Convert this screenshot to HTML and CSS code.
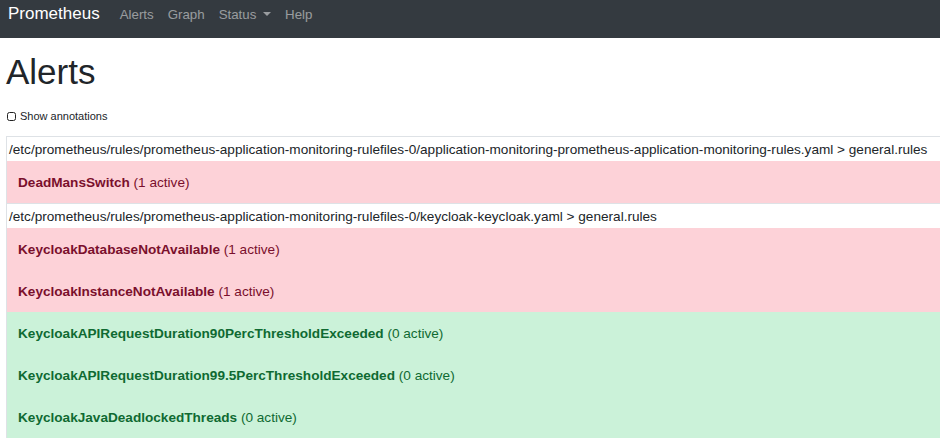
FILE: index.html
```html
<!DOCTYPE html>
<html lang="en">
<head>
<meta charset="utf-8">
<title>Prometheus Time Series Collection and Processing Server</title>
<link rel="stylesheet" href="styles.css">
</head>
<body>
<nav class="navbar">
  <a class="brand" href="#">Prometheus</a>
  <ul class="nav">
    <li><a href="#">Alerts</a></li>
    <li><a href="#">Graph</a></li>
    <li><a href="#">Status <span class="caret"></span></a></li>
    <li><a href="#">Help</a></li>
  </ul>
</nav>
<main class="container">
  <h1 class="title">Alerts</h1>
  <label class="show-ann"><span class="box"></span>Show annotations</label>
  <table class="alerts">
    <tbody>
      <tr class="file"><td>/etc/prometheus/rules/prometheus-application-monitoring-rulefiles-0/application-monitoring-prometheus-application-monitoring-rules.yaml &gt; general.rules</td></tr>
      <tr class="alert firing"><td><b>DeadMansSwitch</b> (1 active)</td></tr>
      <tr class="file"><td>/etc/prometheus/rules/prometheus-application-monitoring-rulefiles-0/keycloak-keycloak.yaml &gt; general.rules</td></tr>
      <tr class="alert firing"><td><b>KeycloakDatabaseNotAvailable</b> (1 active)</td></tr>
      <tr class="alert firing"><td><b>KeycloakInstanceNotAvailable</b> (1 active)</td></tr>
      <tr class="alert ok"><td><b>KeycloakAPIRequestDuration90PercThresholdExceeded</b> (0 active)</td></tr>
      <tr class="alert ok"><td><b>KeycloakAPIRequestDuration99.5PercThresholdExceeded</b> (0 active)</td></tr>
      <tr class="alert ok"><td><b>KeycloakJavaDeadlockedThreads</b> (0 active)</td></tr>
    </tbody>
  </table>
</main>
</body>
</html>
```
FILE: styles.css
```css
html, body { margin: 0; padding: 0; overflow: hidden; }
body {
  font-family: "Liberation Sans", Arial, sans-serif;
  color: #212529;
  background: #fff;
  width: 1000px;
}
a { text-decoration: none; }
.navbar {
  height: 38px;
  box-sizing: border-box;
  background: #343a40;
  display: flex;
  align-items: flex-start;
  padding: 3px 8px 0 8px;
  width: 940px;
}
.brand {
  color: #fff;
  font-size: 17px;
  line-height: 22px;
  margin-right: 20px;
}
.nav {
  display: flex;
  list-style: none;
  margin: 0;
  padding: 0;
  gap: 14px;
  padding-top: 2px;
}
.nav a {
  color: rgba(255,255,255,0.5);
  font-size: 13.3px;
  line-height: 20px;
  display: block;
}
.caret {
  display: inline-block;
  width: 0; height: 0;
  border-left: 4px solid transparent;
  border-right: 4px solid transparent;
  border-top: 4px solid rgba(255,255,255,0.5);
  vertical-align: 3px;
  margin-left: 3px;
}
.container { padding: 0 6px; }
.title {
  font-weight: 400;
  font-size: 35px;
  line-height: 42px;
  margin: 13px 0 0 0;
  color: #212529;
}
.show-ann {
  display: flex;
  align-items: center;
  font-size: 11px;
  color: #212529;
  margin-top: 16px;
  margin-left: 1px;
  height: 14px;
}
.box {
  width: 7px; height: 7px;
  border: 1.5px solid #222;
  border-radius: 2.5px;
  margin-right: 4px;
  display: inline-block;
}
.alerts {
  border-collapse: collapse;
  margin-top: 13px;
  font-size: 13.6px;
  white-space: nowrap;
  width: 960px;
}
.alerts td {
  border-top: 1px solid #dee2e6;
  border-left: 1px solid #dee2e6;
}
.file td {
  padding: 3px 2px;
  height: 18px;
  color: #212529;
  background: #fff;
}
.alert td {
  padding: 11px 11px;
  height: 20px;
  border-top: none;
}
.firing td { background: #fdd2d8; color: #7a0f2c; }
.ok td { background: #cbf2d9; color: #0f6a32; }
```
